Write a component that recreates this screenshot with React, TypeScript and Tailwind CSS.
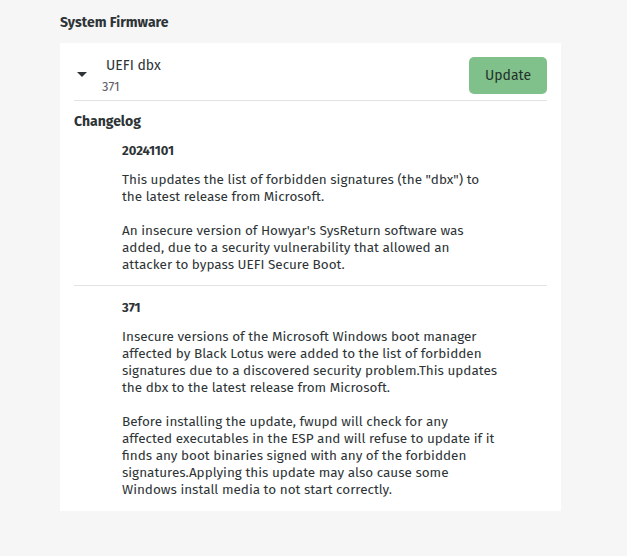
import { Fragment } from 'react'

const releases = [
  {
    version: '20241101',
    paragraphs: [
      ['This updates the list of forbidden signatures (the "dbx") to', 'the latest release from Microsoft.'],
      [
        "An insecure version of Howyar's SysReturn software was",
        'added, due to a security vulnerability that allowed an',
        'attacker to bypass UEFI Secure Boot.',
      ],
    ],
  },
  {
    version: '371',
    paragraphs: [
      [
        'Insecure versions of the Microsoft Windows boot manager',
        'affected by Black Lotus were added to the list of forbidden',
        'signatures due to a discovered security problem.This updates',
        'the dbx to the latest release from Microsoft.',
      ],
      [
        'Before installing the update, fwupd will check for any',
        'affected executables in the ESP and will refuse to update if it',
        'finds any boot binaries signed with any of the forbidden',
        'signatures.Applying this update may also cause some',
        'Windows install media to not start correctly.',
      ],
    ],
  },
]

export default function App() {
  return (
    <div
      className="min-h-[556px] bg-[#f6f6f6] px-[60px] pt-[13px] text-[#2e3436]"
      style={{ fontFamily: '"Fira Sans", "Noto Sans", sans-serif' }}
    >
      <h2 className="h-[19px] text-[14px] font-bold leading-[19px]">System Firmware</h2>

      <div className="mt-[11px] w-[501px] bg-white px-[14px] pb-[13px]">
        {/* Заголовок устройства */}
        <div className="flex h-[58px] items-start border-b border-[#e2e2e2] pt-[14px]">
          <svg width="10" height="5" viewBox="0 0 10 5" className="ml-[3px] mt-[15px]">
            <path d="M0 0 L10 0 L5 5 Z" fill="#2e3436" />
          </svg>
          <div className="ml-[15px] flex flex-col">
            <span className="ml-[4px] text-[14px] leading-[18px]">UEFI dbx</span>
            <span className="mt-[4px] text-[13px] leading-[16px] text-[#5e5c64]">371</span>
          </div>
          <button className="ml-auto h-[37px] w-[78px] rounded-[5px] bg-[#80c08a] text-[14px] text-[#24302a]">
            Update
          </button>
        </div>

        <h3 className="mt-[12px] text-[14px] font-bold leading-[18px]">Changelog</h3>

        {releases.map((r, i) => (
          <div
            key={r.version}
            className={i === 0 ? 'pt-[11px] pb-[12px] pl-[48px]' : 'border-t border-[#e2e2e2] pt-[13px] pl-[48px]'}
          >
            <div className="text-[13px] font-bold leading-[18px]">{r.version}</div>
            <div className="mt-[11px] text-[13.5px] leading-[17px]">
              {r.paragraphs.map((p, j) => (
                <p key={j} className={j > 0 ? 'mt-[17px] whitespace-nowrap' : 'whitespace-nowrap'}>
                  {p.map((line, k) => (
                    <Fragment key={k}>
                      {line}
                      {k < p.length - 1 && <br />}
                    </Fragment>
                  ))}
                </p>
              ))}
            </div>
          </div>
        ))}
      </div>
    </div>
  )
}
